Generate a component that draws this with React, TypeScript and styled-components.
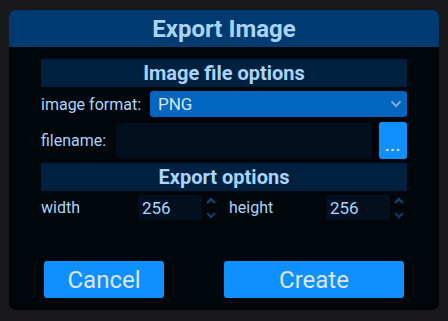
import styled, { createGlobalStyle } from 'styled-components';

const GlobalStyle = createGlobalStyle`
  html, body {
    margin: 0;
    padding: 0;
    background: #19191b;
    font-family: Roboto, "Liberation Sans", sans-serif;
  }
  * { box-sizing: border-box; }
`;

const Dialog = styled.div`
  margin: 10px 9px;
  width: 430px;
  height: 300px;
  border-radius: 7px;
  overflow: hidden;
  background: #01060a;
  display: flex;
  flex-direction: column;
`;

const Header = styled.div`
  height: 37px;
  background: #003a70;
  color: #a8d4ff;
  font-size: 24px;
  font-weight: 700;
  display: flex;
  align-items: center;
  justify-content: center;
`;

const Body = styled.div`
  flex: 1;
  display: flex;
  flex-direction: column;
  padding: 12px 32px 12px;
`;

const SectionTitle = styled.div<{ $gap?: number }>`
  height: 28px;
  margin-top: ${(p) => p.$gap ?? 0}px;
  background: #002040;
  color: #a8d4ff;
  font-size: 20px;
  font-weight: 700;
  display: flex;
  align-items: center;
  justify-content: center;
`;

const Row = styled.div<{ $gap: number; $height: number }>`
  margin-top: ${(p) => p.$gap}px;
  height: ${(p) => p.$height}px;
  display: flex;
  align-items: center;
`;

const Label = styled.label<{ $width: number }>`
  width: ${(p) => p.$width}px;
  flex: none;
  color: #a8d4ff;
  font-size: 16px;
`;

const SelectWrap = styled.div`
  position: relative;
  flex: 1;
  height: 26px;
`;

const Select = styled.select`
  appearance: none;
  width: 100%;
  height: 100%;
  border: none;
  border-radius: 3px;
  background: #0066c0;
  color: #d8e4f0;
  font-family: inherit;
  font-size: 17px;
  padding: 0 8px;
  outline: none;
`;

const Chevron = styled.svg`
  position: absolute;
  right: 5px;
  top: 9px;
  pointer-events: none;
`;

const TextInput = styled.input`
  flex: 1;
  height: 35px;
  border: none;
  border-radius: 3px;
  background: #020f1e;
  color: #a8d4ff;
  font-family: inherit;
  font-size: 16px;
  outline: none;
`;

const DotsButton = styled.button`
  flex: none;
  width: 28px;
  height: 37px;
  margin-left: 8px;
  border: none;
  border-radius: 3px;
  background: #1090ff;
  color: #e0e8f0;
  font-family: inherit;
  font-size: 15px;
  font-weight: 700;
  padding: 10px 0 0;
  letter-spacing: 1px;
`;

const NumberField = styled.div`
  display: flex;
  align-items: center;
  flex: none;
`;

const NumberInput = styled.input`
  width: 64px;
  height: 25px;
  border: none;
  border-radius: 3px;
  background: #020f1e;
  color: #a8d4ff;
  font-family: inherit;
  font-size: 17px;
  padding: 0 4px;
  outline: none;
`;

const Spinner = styled.svg`
  margin: 0 12px 0 3px;
`;

const Footer = styled.div`
  margin-top: auto;
  display: flex;
  justify-content: space-between;
  padding: 0 3px;
`;

const ActionButton = styled.button<{ $width: number }>`
  width: ${(p) => p.$width}px;
  height: 37px;
  border: none;
  border-radius: 3px;
  background: #1090ff;
  color: #dde6ee;
  font-family: inherit;
  font-size: 24px;
`;

function SpinArrows() {
  return (
    <Spinner width="12" height="24" viewBox="0 0 12 24">
      <path d="M2 7 L6 3 L10 7" fill="none" stroke="#0c4a86" strokeWidth="2" />
      <path d="M2 17 L6 21 L10 17" fill="none" stroke="#0c3e70" strokeWidth="2" />
    </Spinner>
  );
}

export default function App() {
  return (
    <>
      <GlobalStyle />
      <Dialog>
        <Header>Export Image</Header>
        <Body>
          <SectionTitle>Image file options</SectionTitle>
          <Row $gap={4} $height={26}>
            <Label $width={109}>image format:</Label>
            <SelectWrap>
              <Select defaultValue="PNG">
                <option>PNG</option>
                <option>JPEG</option>
              </Select>
              <Chevron width="12" height="8" viewBox="0 0 12 8">
                <path d="M1.5 1.5 L6 6 L10.5 1.5" fill="none" stroke="#8aa8c8" strokeWidth="2" />
              </Chevron>
            </SelectWrap>
          </Row>
          <Row $gap={5} $height={37}>
            <Label $width={75}>filename:</Label>
            <TextInput />
            <DotsButton>...</DotsButton>
          </Row>
          <SectionTitle $gap={4}>Export options</SectionTitle>
          <Row $gap={4} $height={25}>
            <Label $width={97}>width</Label>
            <NumberField>
              <NumberInput defaultValue="256" />
              <SpinArrows />
            </NumberField>
            <Label $width={97}>height</Label>
            <NumberField>
              <NumberInput defaultValue="256" />
              <SpinArrows />
            </NumberField>
          </Row>
          <Footer>
            <ActionButton $width={120}>Cancel</ActionButton>
            <ActionButton $width={180}>Create</ActionButton>
          </Footer>
        </Body>
      </Dialog>
    </>
  );
}
